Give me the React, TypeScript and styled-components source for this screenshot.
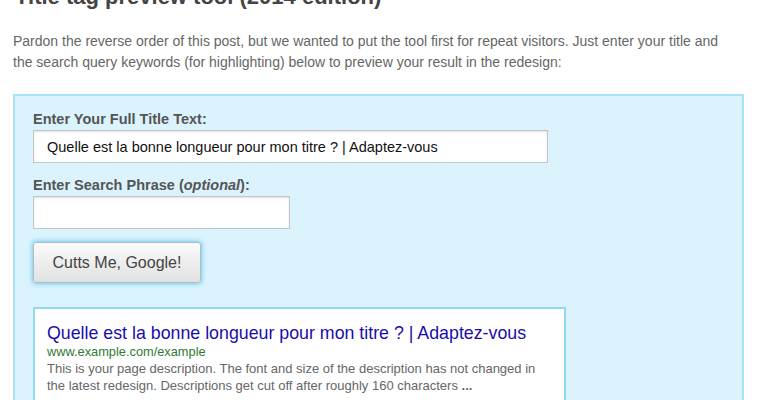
import React from "react";
import styled, { createGlobalStyle } from "styled-components";

const GlobalStyle = createGlobalStyle`
  html, body {
    margin: 0;
    padding: 0;
    background: #ffffff;
    font-family: "Liberation Sans", Arial, sans-serif;
  }
`;

const Page = styled.div`
  padding: 0 15px 0 13px;
  overflow: hidden;
  height: 400px;
`;

const Heading = styled.h2`
  margin: -16px 0 0 2px;
  font-size: 22px;
  line-height: 26px;
  font-weight: bold;
  color: #444444;
`;

const Intro = styled.p`
  margin: 21px 0 0 0;
  max-width: 722px;
  font-size: 14px;
  line-height: 21px;
  color: #666666;
`;

const ToolBox = styled.div`
  margin-top: 21px;
  background: #daf3fd;
  border: 2px solid #a6e2f8;
  padding: 15px 18px 18px 18px;
`;

const Label = styled.label`
  display: block;
  font-size: 14.5px;
  font-weight: bold;
  color: #555555;
  line-height: 17px;
  margin-bottom: 2px;
`;

const Field = styled.div`
  margin-bottom: 14px;
`;

const TextInput = styled.input<{ $width: number }>`
  display: block;
  box-sizing: border-box;
  width: ${(p) => p.$width}px;
  height: 33px;
  padding: 0 13px;
  border: 1px solid #c4c4c4;
  box-shadow: inset 0 1px 2px rgba(0, 0, 0, 0.12);
  background: #ffffff;
  font-family: "Liberation Sans", Arial, sans-serif;
  font-size: 14.5px;
  color: #111111;
  outline: none;
`;

const Button = styled.button`
  display: block;
  margin-top: -1px;
  width: 168px;
  height: 41px;
  border: 1px solid #b9b9b9;
  border-radius: 3px;
  background: linear-gradient(#fbfbfb, #e1e1e1);
  box-shadow: 0 0 4px 1px #6cccf3;
  font-family: "Liberation Sans", Arial, sans-serif;
  font-size: 16px;
  color: #444444;
  cursor: pointer;
`;

const Result = styled.div`
  margin-top: 24px;
  width: 533px;
  box-sizing: border-box;
  background: #ffffff;
  border: 2px solid #92d9f6;
  padding: 14px 12px 10px 12px;
`;

const ResultTitle = styled.a`
  display: block;
  font-size: 17.8px;
  line-height: 21px;
  color: #1a0dab;
  text-decoration: none;
`;

const ResultUrl = styled.div`
  font-size: 12.8px;
  line-height: 16px;
  color: #2f7a35;
`;

const ResultDesc = styled.div`
  font-size: 13px;
  line-height: 17px;
  color: #666666;
`;

export default function App() {
  return (
    <>
      <GlobalStyle />
      <Page>
        <Heading>Title tag preview tool (2014 edition)</Heading>
        <Intro>
          Pardon the reverse order of this post, but we wanted to put the tool
          first for repeat visitors. Just enter your title and the search query
          keywords (for highlighting) below to preview your result in the
          redesign:
        </Intro>
        <ToolBox>
          <Field>
            <Label>Enter Your Full Title Text:</Label>
            <TextInput
              $width={515}
              defaultValue="Quelle est la bonne longueur pour mon titre ? | Adaptez-vous"
            />
          </Field>
          <Field>
            <Label>
              Enter Search Phrase (<i>optional</i>):
            </Label>
            <TextInput $width={257} defaultValue="" />
          </Field>
          <Button>Cutts Me, Google!</Button>
          <Result>
            <ResultTitle href="#">
              Quelle est la bonne longueur pour mon titre ? | Adaptez-vous
            </ResultTitle>
            <ResultUrl>www.example.com/example</ResultUrl>
            <ResultDesc>
              This is your page description. The font and size of the
              description has not changed in the latest redesign. Descriptions
              get cut off after roughly 160 characters <b>...</b>
            </ResultDesc>
          </Result>
        </ToolBox>
      </Page>
    </>
  );
}
